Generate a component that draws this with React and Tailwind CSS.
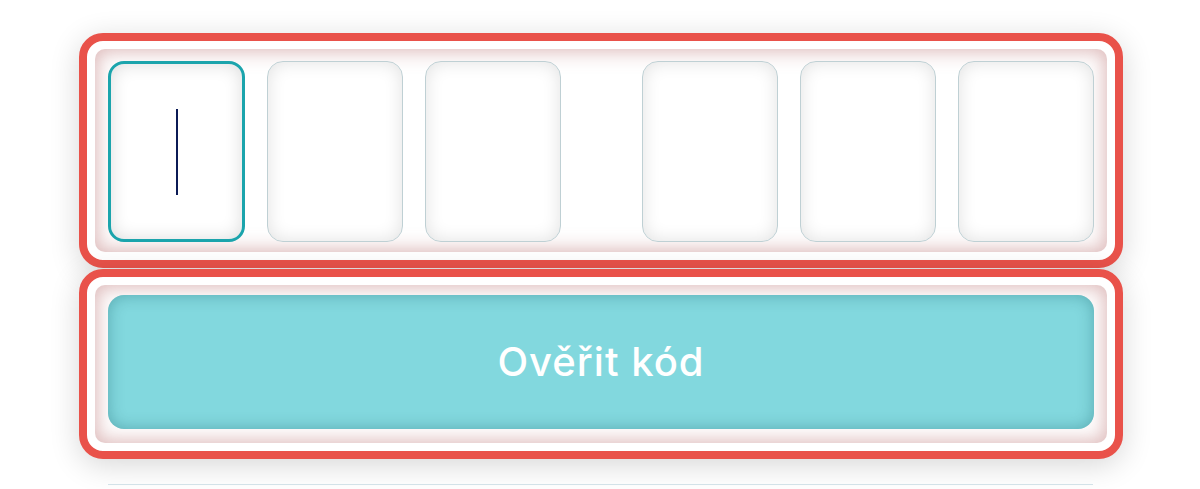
export default function App() {
  const cells = [0, 1, 2, 3, 4, 5];

  return (
    <div className="min-h-[489px] w-[1200px] bg-white pt-[33px] pl-[79px]" style={{ fontFamily: "Inter, 'Noto Sans', sans-serif" }}>
      <div className="w-[1044px]">
        {/* code cells */}
        <div className="rounded-[24px] border-[8px] border-[#e9524a] bg-white p-[8px] shadow-[0_6px_30px_rgba(0,0,0,0.16)]">
          <div className="flex justify-between rounded-[10px] bg-white px-[13px] pt-[12px] pb-[10px] shadow-[inset_0_0_18px_3px_rgba(190,120,120,0.5)]">
            {[cells.slice(0, 3), cells.slice(3)].map((group, g) => (
              <div key={g} className="flex gap-[22px]">
                {group.map((i) => (
                  <div
                    key={i}
                    className={
                      i === 0
                        ? "flex h-[181px] w-[137px] items-center justify-center rounded-[16px] border-[3px] border-[#1ba4ac] bg-white shadow-[inset_0_0_18px_rgba(0,0,0,0.14)]"
                        : "flex h-[181px] w-[136px] items-center justify-center rounded-[16px] border-[1.5px] border-[#bfd0d4] bg-white shadow-[inset_0_0_18px_rgba(0,0,0,0.12)]"
                    }
                  >
                    {i === 0 && <div className="h-[86px] w-[2px] bg-[#0b1a55]" />}
                  </div>
                ))}
              </div>
            ))}
          </div>
        </div>

        {/* submit */}
        <div className="mt-px rounded-[24px] border-[8px] border-[#e9524a] bg-white p-[8px] shadow-[0_6px_30px_rgba(0,0,0,0.16)]">
          <div className="rounded-[10px] bg-white px-[13px] pt-[10px] pb-[14px] shadow-[inset_0_0_18px_3px_rgba(190,120,120,0.5)]">
            <button className="flex h-[134px] w-full items-center justify-center rounded-[16px] bg-[#82d8de] text-[40px] font-medium tracking-[1px] text-white shadow-[inset_0_0_16px_rgba(0,70,80,0.32)]">
              Ověřit kód
            </button>
          </div>
        </div>

        <div className="mt-[25px] ml-[29px] h-px w-[985px] bg-[#d3e2e8]" />
      </div>
    </div>
  );
}
